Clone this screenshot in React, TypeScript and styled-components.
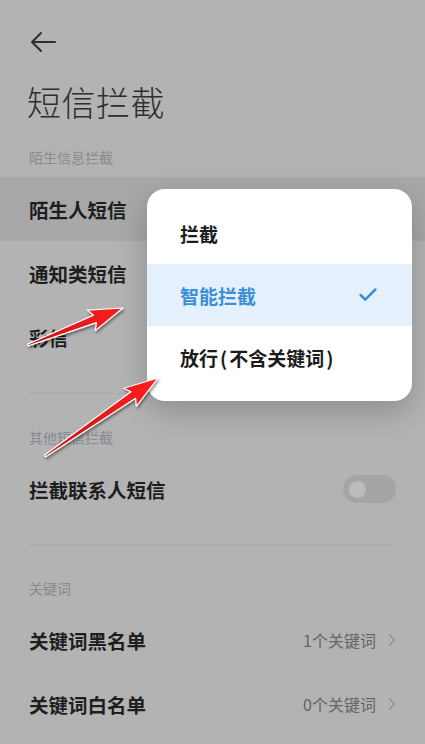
import styled, { createGlobalStyle } from "styled-components";
import { Check, ChevronRight } from "lucide-react";

const GlobalStyle = createGlobalStyle`
  html, body {
    margin: 0;
    padding: 0;
    background: #b3b3b3;
    font-family: "Noto Sans CJK SC", "Noto Sans", sans-serif;
  }
`;

const Page = styled.div`
  position: relative;
  width: 425px;
  min-height: 744px;
  background: #b3b3b3;
  overflow: hidden;
`;

const TopBar = styled.div`
  padding: 30px 0 0 29px;
  height: 24px;
  display: flex;
  align-items: center;
`;

const Title = styled.h1`
  margin: 28px 0 0;
  padding: 0 27px;
  font-size: 34px;
  line-height: 40px;
  font-weight: 300;
  color: #2e2e2e;
  letter-spacing: 0.5px;
`;

const SectionHeader = styled.div<{ $top: number }>`
  margin-top: ${({ $top }) => $top}px;
  margin-bottom: 10px;
  padding: 0 29px;
  font-size: 14px;
  line-height: 20px;
  color: #868a92;
`;

const Row = styled.div<{ $active?: boolean }>`
  height: 64px;
  padding: 0 29px;
  display: flex;
  align-items: center;
  justify-content: space-between;
  background: ${({ $active }) => ($active ? "#a8a8a8" : "transparent")};
`;

const RowLabel = styled.span`
  font-size: 19.5px;
  font-weight: 700;
  color: #1e1e1e;
`;

const RowValue = styled.span`
  display: flex;
  align-items: center;
  gap: 6px;
  font-size: 16px;
  color: #656565;
  svg {
    color: #8e8e8e;
    margin-right: -6px;
  }
`;

const Divider = styled.div`
  margin: 24px 29px 0;
  height: 1px;
  background: #aaaaaa;
`;

const Toggle = styled.div`
  width: 53px;
  height: 28px;
  border-radius: 14px;
  background: #a5a5a5;
  display: flex;
  align-items: center;
  padding-left: 6px;
  box-sizing: border-box;
`;

const Knob = styled.div`
  width: 17px;
  height: 17px;
  border-radius: 50%;
  background: #bcbcbc;
`;

const Popup = styled.div`
  position: absolute;
  left: 147px;
  top: 189px;
  width: 265px;
  padding: 13px 0;
  background: #ffffff;
  border-radius: 18px;
  box-shadow: 0 10px 30px rgba(0, 0, 0, 0.22);
`;

const MenuItem = styled.div<{ $selected?: boolean }>`
  height: 62px;
  padding: 0 33px 0 33px;
  display: flex;
  align-items: center;
  justify-content: space-between;
  font-size: 19px;
  font-weight: 700;
  color: ${({ $selected }) => ($selected ? "#3a8fd6" : "#1c1c1c")};
  background: ${({ $selected }) => ($selected ? "#e4f1fc" : "transparent")};
`;

const Paren = styled.span`
  margin: 0 2px;
`;

const Annotations = styled.svg`
  position: absolute;
  left: 0;
  top: 0;
  pointer-events: none;
`;

type Pt = [number, number];

const arrowPoints = (tail: Pt, tip: Pt) => {
  const dx = tip[0] - tail[0];
  const dy = tip[1] - tail[1];
  const len = Math.hypot(dx, dy);
  const ux = dx / len;
  const uy = dy / len;
  const nx = -uy;
  const ny = ux;
  const head = 30;
  const base: Pt = [tip[0] - ux * head, tip[1] - uy * head];
  const barb: Pt = [tip[0] - ux * (head + 4), tip[1] - uy * (head + 4)];
  const p = (x: number, y: number) => `${x.toFixed(1)},${y.toFixed(1)}`;
  return [
    p(tail[0] + nx * 1, tail[1] + ny * 1),
    p(base[0] + nx * 4, base[1] + ny * 4),
    p(barb[0] + nx * 11, barb[1] + ny * 11),
    p(tip[0], tip[1]),
    p(barb[0] - nx * 11, barb[1] - ny * 11),
    p(base[0] - nx * 4, base[1] - ny * 4),
    p(tail[0] - nx * 1, tail[1] - ny * 1),
  ].join(" ");
};

const arrows: [Pt, Pt][] = [
  [[28, 345], [123, 308]],
  [[45, 456], [158, 378]],
];

const BackArrow = () => (
  <svg width="28" height="24" viewBox="0 0 28 24" fill="none">
    <path d="M3 12H26M12 3L3 12L12 21" stroke="#2e2e2e" strokeWidth="2" strokeLinecap="round" strokeLinejoin="round" />
  </svg>
);

export default function App() {
  return (
    <>
      <GlobalStyle />
      <Page>
        <TopBar>
          <BackArrow />
        </TopBar>
        <Title>短信拦截</Title>

        <SectionHeader $top={25}>陌生信息拦截</SectionHeader>
        <Row $active>
          <RowLabel>陌生人短信</RowLabel>
        </Row>
        <Row>
          <RowLabel>通知类短信</RowLabel>
        </Row>
        <Row>
          <RowLabel>彩信</RowLabel>
        </Row>
        <Divider />

        <SectionHeader $top={33}>其他短信拦截</SectionHeader>
        <Row>
          <RowLabel>拦截联系人短信</RowLabel>
          <Toggle>
            <Knob />
          </Toggle>
        </Row>
        <Divider />

        <SectionHeader $top={32}>关键词</SectionHeader>
        <Row>
          <RowLabel>关键词黑名单</RowLabel>
          <RowValue>
            1个关键词
            <ChevronRight size={20} strokeWidth={1.5} />
          </RowValue>
        </Row>
        <Row>
          <RowLabel>关键词白名单</RowLabel>
          <RowValue>
            0个关键词
            <ChevronRight size={20} strokeWidth={1.5} />
          </RowValue>
        </Row>

        <Popup>
          <MenuItem>拦截</MenuItem>
          <MenuItem $selected>
            智能拦截
            <Check size={22} strokeWidth={2.8} />
          </MenuItem>
          <MenuItem>
            <span>
              放行<Paren>(</Paren>不含关键词<Paren>)</Paren>
            </span>
          </MenuItem>
        </Popup>

        <Annotations width="425" height="744" viewBox="0 0 425 744">
          <defs>
            <linearGradient id="red" x1="0" y1="0" x2="1" y2="0">
              <stop offset="0" stopColor="#c81414" />
              <stop offset="1" stopColor="#ff2020" />
            </linearGradient>
            <filter id="shadow" x="-20%" y="-20%" width="140%" height="140%">
              <feDropShadow dx="1" dy="2" stdDeviation="1.5" floodColor="#000" floodOpacity="0.45" />
            </filter>
          </defs>
          {arrows.map(([tail, tip], i) => (
            <polygon
              key={i}
              points={arrowPoints(tail, tip)}
              fill="url(#red)"
              stroke="#ffffff"
              strokeWidth="1.2"
              strokeLinejoin="round"
              filter="url(#shadow)"
            />
          ))}
        </Annotations>
      </Page>
    </>
  );
}
